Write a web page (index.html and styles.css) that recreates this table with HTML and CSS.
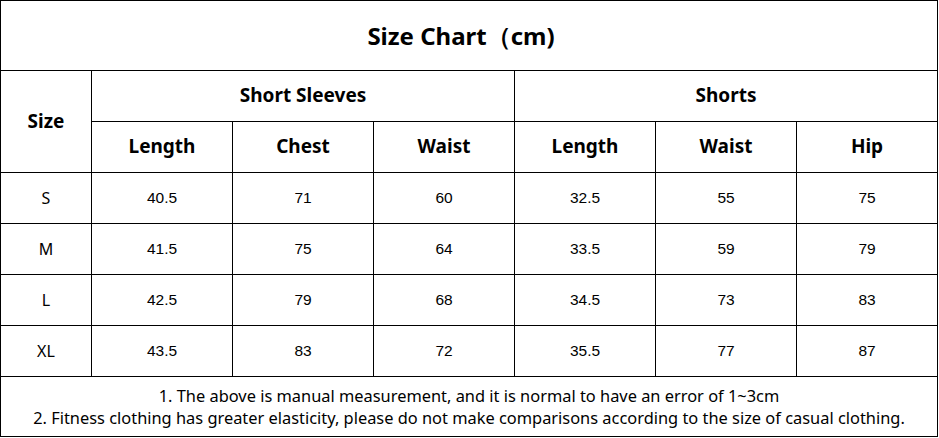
FILE: index.html
```html
<!DOCTYPE html>
<html lang="en">
<head>
  <meta charset="UTF-8">
  <title>Size Chart</title>
  <link rel="stylesheet" href="styles.css">
</head>
<body>
  <table class="chart">
    <colgroup>
      <col class="col-size">
      <col><col><col><col><col><col>
    </colgroup>
    <!-- Titulo -->
    <tr class="title-row">
      <th colspan="7" class="title">Size Chart（cm)</th>
    </tr>
    <tr class="head-row">
      <th rowspan="2" class="size-head">Size</th>
      <th colspan="3">Short Sleeves</th>
      <th colspan="3">Shorts</th>
    </tr>
    <tr class="head-row">
      <th>Length</th>
      <th>Chest</th>
      <th>Waist</th>
      <th>Length</th>
      <th>Waist</th>
      <th>Hip</th>
    </tr>
    <!-- Medidas -->
    <tr class="data-row">
      <td class="size">S</td>
      <td>40.5</td><td>71</td><td>60</td>
      <td>32.5</td><td>55</td><td>75</td>
    </tr>
    <tr class="data-row">
      <td class="size">M</td>
      <td>41.5</td><td>75</td><td>64</td>
      <td>33.5</td><td>59</td><td>79</td>
    </tr>
    <tr class="data-row">
      <td class="size">L</td>
      <td>42.5</td><td>79</td><td>68</td>
      <td>34.5</td><td>73</td><td>83</td>
    </tr>
    <tr class="data-row">
      <td class="size">XL</td>
      <td>43.5</td><td>83</td><td>72</td>
      <td>35.5</td><td>77</td><td>87</td>
    </tr>
    <!-- Notas -->
    <tr class="note-row">
      <td colspan="7" class="notes">
        1. The above is manual measurement, and it is normal to have an error of 1~3cm<br>
        2. Fitness clothing has greater elasticity, please do not make comparisons according to the size of casual clothing.
      </td>
    </tr>
  </table>
</body>
</html>
```

FILE: styles.css
```css
body {
  margin: 0;
  padding: 0;
  background-color: white;
  color: black;
  font-family: 'Noto Sans', 'Open Sans', sans-serif;
}

.chart {
  border-collapse: collapse;
  table-layout: fixed;
  width: 938px;
}

.chart th,
.chart td {
  border: 1px solid black;
  padding: 0;
  text-align: center;
  vertical-align: middle;
}

.col-size {
  width: 91px;
}

.title-row {
  height: 70px;
}

.chart th.title {
  font-size: 24px;
  font-weight: bold;
  padding-top: 1px;
  text-indent: -16px;
}

.head-row {
  height: 51px;
}

.head-row th {
  font-size: 19px;
  font-weight: bold;
  padding-bottom: 3px;
}

.head-row th.size-head {
  padding-bottom: 1px;
}

.data-row {
  height: 51px;
}

.data-row td {
  font-family: 'Liberation Sans', Arial, sans-serif;
  font-size: 15.5px;
}

.data-row td.size {
  font-family: 'Noto Sans', 'Open Sans', sans-serif;
  font-size: 16px;
}

.note-row {
  height: 60px;
}

.notes {
  font-size: 16.4px;
  line-height: 22px;
}
```
